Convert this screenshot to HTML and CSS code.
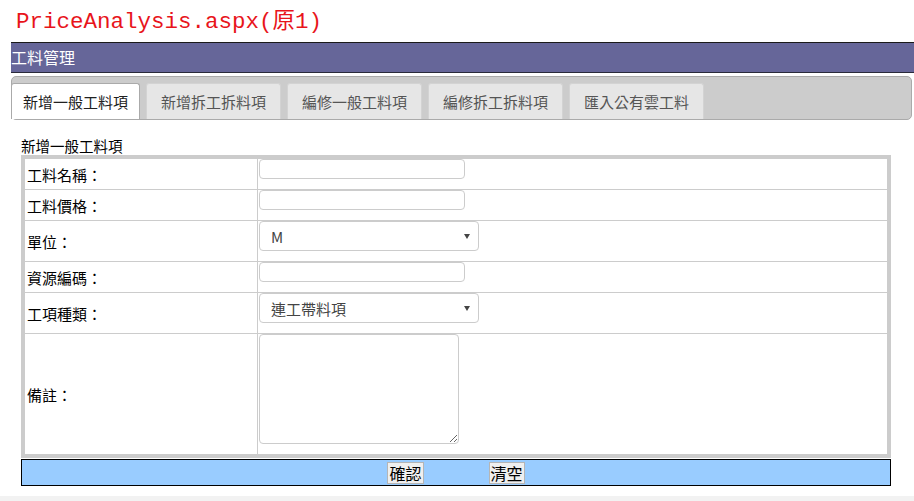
FILE: index.html
```html
<!DOCTYPE html>
<html lang="zh-Hant">
<head>
<meta charset="utf-8">
<title>PriceAnalysis</title>
<link rel="stylesheet" href="styles.css">
</head>
<body>
<h1 class="page-title">PriceAnalysis.aspx(原1)</h1>
<div class="main">
  <div class="header">工料管理</div>
  <div class="tabs">
    <ul class="tab-list">
      <li class="tab active">新增一般工料項</li>
      <li class="tab">新增拆工拆料項</li>
      <li class="tab">編修一般工料項</li>
      <li class="tab">編修拆工拆料項</li>
      <li class="tab">匯入公有雲工料</li>
    </ul>
  </div>
  <div class="content">
    <div class="subtitle">新增一般工料項</div>
    <table class="form-table">
      <tr>
        <td class="label">工料名稱：</td>
        <td class="field"><input class="text-input" type="text"></td>
      </tr>
      <tr>
        <td class="label">工料價格：</td>
        <td class="field"><input class="text-input" type="text"></td>
      </tr>
      <tr>
        <td class="label">單位：</td>
        <td class="field"><span class="select-wrap"><select class="select"><option>M</option></select></span></td>
      </tr>
      <tr>
        <td class="label">資源編碼：</td>
        <td class="field"><input class="text-input" type="text"></td>
      </tr>
      <tr>
        <td class="label">工項種類：</td>
        <td class="field"><span class="select-wrap"><select class="select"><option>連工帶料項</option></select></span></td>
      </tr>
      <tr>
        <td class="label">備註：</td>
        <td class="field"><textarea class="textarea"></textarea></td>
      </tr>
    </table>
    <div class="button-bar">
      <button class="btn" type="button">確認</button>
      <button class="btn" type="button">清空</button>
    </div>
  </div>
</div>
<div class="footer-strip"></div>
</body>
</html>
```

FILE: styles.css
```css
html, body {
  margin: 0;
  padding: 0;
  background: #ffffff;
}

body {
  font-family: "Noto Sans CJK TC", "Liberation Sans", sans-serif;
  color: #000;
}

.page-title {
  margin: 0;
  padding: 8px 0 0 16px;
  height: 28px;
  font-family: "Liberation Mono", "Noto Sans CJK TC", monospace;
  font-weight: normal;
  font-size: 22.5px;
  line-height: 29px;
  color: #e8141b;
}

.main {
  padding-left: 11px;
}

.header {
  margin-top: 6px;
  height: 29px;
  border-top: 1px solid #1a1a1a;
  border-bottom: 1px solid #2a2a3a;
  background: #666699;
  color: #ffffff;
  font-size: 16px;
  line-height: 29px;
}

.tabs {
  margin: 3px 2px 0 0;
  border: 1px solid #aaaaaa;
  border-radius: 5px;
  background: #cccccc;
  padding-top: 6px;
}

.tab-list {
  list-style: none;
  margin: 0 0 0 -1px;
  padding: 0;
  display: flex;
  gap: 6px;
}

.tab {
  box-sizing: border-box;
  height: 36px;
  padding: 0 14px;
  border: 1px solid #d3d3d3;
  border-bottom: none;
  border-radius: 3px 3px 0 0;
  background: #e6e6e6;
  color: #555555;
  font-size: 15px;
  line-height: 36px;
  white-space: nowrap;
}

.tab.active {
  padding: 0 11px;
  background: #ffffff;
  color: #212121;
  border-color: #aaaaaa;
}

.content {
  padding-left: 10px;
}

.subtitle {
  margin-top: 16px;
  height: 19px;
  font-size: 14.5px;
  line-height: 20px;
}

.form-table {
  width: 870px;
  border: 4px solid #cccccc;
  border-collapse: collapse;
  border-spacing: 0;
}

.form-table tr + tr td {
  border-top: 1px solid #cccccc;
}

.label {
  width: 230px;
  padding: 0 0 0 2px;
  font-size: 15px;
  vertical-align: middle;
}

.field {
  padding: 0;
  border-left: 1px solid #cccccc;
  vertical-align: top;
  line-height: 0;
}

.text-input {
  box-sizing: border-box;
  width: 206px;
  height: 20px;
  margin: 0 0 10px 1px;
  padding: 0 6px;
  border: 1px solid #cccccc;
  border-radius: 4px;
  background: #fff;
  outline: none;
}

.select-wrap {
  position: relative;
  display: inline-block;
  line-height: 0;
}

.select-wrap::after {
  content: "";
  position: absolute;
  right: 9px;
  top: 13px;
  border-left: 3px solid transparent;
  border-right: 3px solid transparent;
  border-top: 5px solid #444;
}

.select {
  box-sizing: border-box;
  width: 220px;
  height: 30px;
  margin: 0 0 10px 1px;
  padding: 0 11px;
  border: 1px solid #cccccc;
  border-radius: 4px;
  background: #fff;
  color: #444;
  font-family: "Noto Sans CJK TC", "Liberation Sans", sans-serif;
  font-size: 15px;
  font-weight: normal;
  -webkit-appearance: none;
  appearance: none;
  outline: none;
}

.textarea {
  box-sizing: border-box;
  width: 200px;
  height: 110px;
  margin: 0 0 10px 1px;
  border: 1px solid #cccccc;
  border-radius: 4px;
  display: block;
}

.button-bar {
  box-sizing: border-box;
  width: 870px;
  height: 27px;
  margin-top: 1px;
  border: 1px solid #000;
  background: #99ccff;
  display: flex;
  justify-content: center;
  align-items: center;
  gap: 65px;
}

.btn {
  box-sizing: border-box;
  height: 22px;
  padding: 0 1px;
  border: 1px solid #b5b5b5;
  background: #efefef;
  font-family: "Noto Sans CJK TC", sans-serif;
  font-size: 16px;
  line-height: 20px;
  color: #000;
}

.footer-strip {
  margin-top: 10px;
  height: 10px;
  background: #f2f2f2;
}
```
